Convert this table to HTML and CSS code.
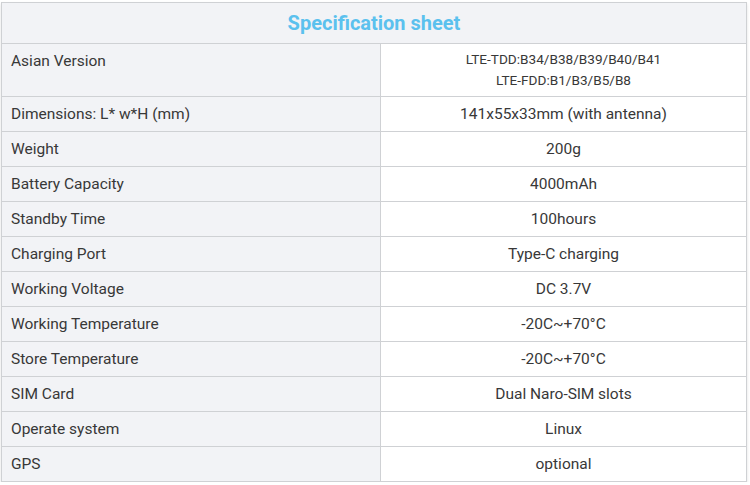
FILE: index.html
```html
<!DOCTYPE html>
<html>
<head>
<meta charset="utf-8">
<link rel="stylesheet" href="styles.css">
</head>
<body>
<table class="spec">
  <colgroup><col class="c1"><col class="c2"></colgroup>
  <thead>
    <tr><th colspan="2" class="title">Specification sheet</th></tr>
  </thead>
  <tbody>
    <tr class="tall"><td class="k">Asian Version</td><td class="v small">LTE-TDD:B34/B38/B39/B40/B41<br>LTE-FDD:B1/B3/B5/B8</td></tr>
    <tr><td class="k">Dimensions: L* w*H (mm)</td><td class="v">141x55x33mm (with antenna)</td></tr>
    <tr><td class="k">Weight</td><td class="v">200g</td></tr>
    <tr><td class="k">Battery Capacity</td><td class="v">4000mAh</td></tr>
    <tr><td class="k">Standby Time</td><td class="v">100hours</td></tr>
    <tr><td class="k">Charging Port</td><td class="v">Type-C charging</td></tr>
    <tr><td class="k">Working Voltage</td><td class="v">DC 3.7V</td></tr>
    <tr><td class="k">Working Temperature</td><td class="v">-20C~+70°C</td></tr>
    <tr><td class="k">Store Temperature</td><td class="v">-20C~+70°C</td></tr>
    <tr><td class="k">SIM Card</td><td class="v">Dual Naro-SlM slots</td></tr>
    <tr><td class="k">Operate system</td><td class="v">Linux</td></tr>
    <tr><td class="k">GPS</td><td class="v">optional</td></tr>
  </tbody>
</table>
</body>
</html>
```
FILE: styles.css
```css
html, body { margin: 0; padding: 0; background: #fff; }
body { padding: 2px 0 0 1px; font-family: Roboto, "Liberation Sans", sans-serif; color: #383838; }
.spec {
  border-collapse: collapse;
  width: 746px;
  table-layout: fixed;
  box-shadow: 0 2px 3px rgba(0,0,0,0.12);
}
.c1 { width: 379px; }
.spec th, .spec td { border: 1px solid #cfd1d4; padding: 0; }
.title {
  height: 40px;
  background: #f2f3f6;
  color: #5bc1ee;
  font-size: 20px;
  font-weight: 700;
  text-align: center;
}
.spec td { height: 34px; font-size: 15.5px; }
.k { background: #f2f3f6; padding-left: 9px !important; }
.v { background: #fff; text-align: center; }
.tall td { height: 44px; vertical-align: top; }
.tall .k { padding-top: 8px !important; }
.small { font-size: 13.6px !important; line-height: 21px; padding-top: 5px !important; }
```
